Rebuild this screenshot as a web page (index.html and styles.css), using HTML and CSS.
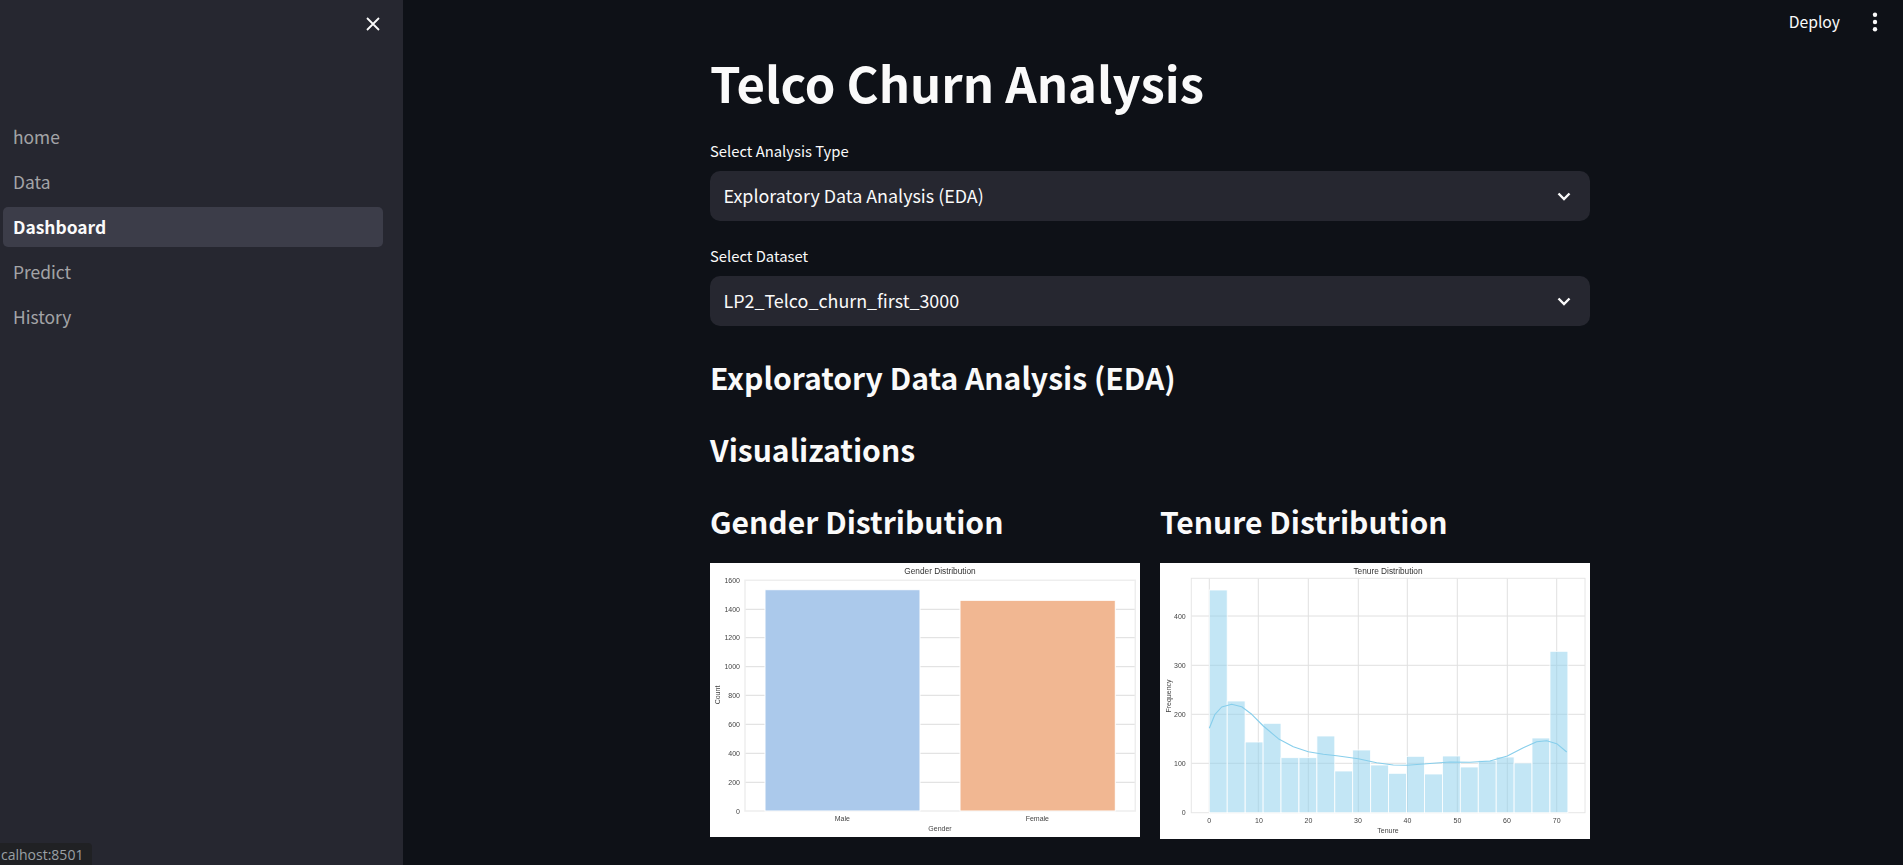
FILE: index.html
```html
<!DOCTYPE html>
<html>
  <head>
    <title>Dashboard</title>
    <link rel="stylesheet" href="styles.css">
  </head>
  <body>
    <div class="app">
      <aside class="sidebar">
        <div class="sidebar-top">
          <svg class="close-icon" width="14" height="14" viewBox="0 0 14 14">
            <path d="M1 1L13 13M13 1L1 13" stroke="#fafafa" stroke-width="1.8" fill="none" />
          </svg>
        </div>
        <nav class="nav">
          <a class="nav-item">home</a>
          <a class="nav-item">Data</a>
          <a class="nav-item active">Dashboard</a>
          <a class="nav-item">Predict</a>
          <a class="nav-item">History</a>
        </nav>
      </aside>

      <main class="main">
        <header class="toolbar">
          <span class="deploy">Deploy</span>
          <svg class="kebab" width="6" height="20" viewBox="0 0 6 20">
            <circle cx="3" cy="2.8" r="2.2" fill="#fafafa" />
            <circle cx="3" cy="10" r="2.2" fill="#fafafa" />
            <circle cx="3" cy="17.2" r="2.2" fill="#fafafa" />
          </svg>
        </header>

        <div class="content">
          <h1 class="title">Telco Churn Analysis</h1>

          <label class="field-label">Select Analysis Type</label>
          <div class="select">
            <span>Exploratory Data Analysis (EDA)</span>
            <svg width="14" height="9" viewBox="0 0 14 9">
              <path d="M1.5 1.5L7 7L12.5 1.5" stroke="#fafafa" stroke-width="2.4" fill="none" />
            </svg>
          </div>

          <label class="field-label second">Select Dataset</label>
          <div class="select">
            <span>LP2_Telco_churn_first_3000</span>
            <svg width="14" height="9" viewBox="0 0 14 9">
              <path d="M1.5 1.5L7 7L12.5 1.5" stroke="#fafafa" stroke-width="2.4" fill="none" />
            </svg>
          </div>

          <h2 class="heading first">Exploratory Data Analysis (EDA)</h2>
          <h2 class="heading">Visualizations</h2>

          <div class="columns">
            <section class="column">
              <h2 class="heading">Gender Distribution</h2>
              <svg class="chart" width="430" height="274" viewBox="0 0 430 274">
                <rect width="430" height="274" fill="#fff" />
                <g stroke="#ddd" stroke-width="1">
                  <path d="M35 46.3H425M35 74.7H425M35 103.7H425M35 132.3H425M35 161.3H425M35 190.3H425M35 219.3H425" />
                </g>
                <rect x="35" y="17.3" width="390.3" height="230.7" fill="none" stroke="#eee" stroke-width="1.5" />
                <rect x="55" y="26.7" width="155" height="221.3" fill="#abc9eb" stroke="#fff" />
                <rect x="250" y="37.3" width="155.3" height="210.7" fill="#f1b792" stroke="#fff" />
                <g class="chart-text">
                  <text x="230" y="10.5" text-anchor="middle" class="chart-title">Gender Distribution</text>
                  <g text-anchor="end">
                    <text x="30" y="19.8">1600</text>
                    <text x="30" y="48.8">1400</text>
                    <text x="30" y="77.2">1200</text>
                    <text x="30" y="106.2">1000</text>
                    <text x="30" y="134.8">800</text>
                    <text x="30" y="163.8">600</text>
                    <text x="30" y="192.8">400</text>
                    <text x="30" y="221.8">200</text>
                    <text x="30" y="250.5">0</text>
                  </g>
                  <g text-anchor="middle">
                    <text x="132.3" y="257.5">Male</text>
                    <text x="327.3" y="257.5">Female</text>
                    <text x="230" y="267.5">Gender</text>
                    <text transform="translate(10 132) rotate(-90)">Count</text>
                  </g>
                </g>
              </svg>
            </section>

            <section class="column">
              <h2 class="heading">Tenure Distribution</h2>
              <svg class="chart" width="430" height="276" viewBox="0 0 430 276">
                <rect width="430" height="276" fill="#fff" />
                <g stroke="#e0e0e0" stroke-width="1">
                  <path d="M31.3 53H425M31.3 102.3H425M31.3 151.3H425M31.3 200.3H425" />
                  <path d="M49.3 15.3V249.7M98.3 15.3V249.7M148.3 15.3V249.7M198.3 15.3V249.7M247.3 15.3V249.7M297.3 15.3V249.7M347.3 15.3V249.7M396.7 15.3V249.7" />
                </g>
                <rect x="31.3" y="15.3" width="393.7" height="234.4" fill="none" stroke="#e6e6e6" stroke-width="1" />
                <g fill="#87ceeb" fill-opacity="0.5" stroke="#fff" stroke-width="0.8">
                  <rect x="49.3" y="27" width="17.9" height="222.7" />
                  <rect x="67.2" y="138" width="17.9" height="111.7" />
                  <rect x="85.2" y="179" width="17.9" height="70.7" />
                  <rect x="103.1" y="160.3" width="17.9" height="89.4" />
                  <rect x="121" y="194.7" width="17.9" height="55" />
                  <rect x="139" y="194.7" width="17.9" height="55" />
                  <rect x="156.9" y="173" width="17.9" height="76.7" />
                  <rect x="174.8" y="208" width="17.9" height="41.7" />
                  <rect x="192.7" y="187" width="17.9" height="62.7" />
                  <rect x="210.7" y="202" width="17.9" height="47.7" />
                  <rect x="228.6" y="210.3" width="17.9" height="39.4" />
                  <rect x="246.5" y="193.3" width="17.9" height="56.4" />
                  <rect x="264.5" y="211" width="17.9" height="38.7" />
                  <rect x="282.4" y="193" width="17.9" height="56.7" />
                  <rect x="300.3" y="204" width="17.9" height="45.7" />
                  <rect x="318.3" y="197.3" width="17.9" height="52.4" />
                  <rect x="336.2" y="194" width="17.9" height="55.7" />
                  <rect x="354.1" y="200" width="17.9" height="49.7" />
                  <rect x="372" y="175" width="17.9" height="74.7" />
                  <rect x="390" y="88.3" width="17.9" height="161.4" />
                </g>
                <polyline fill="none" stroke="#87ceeb" stroke-width="1.1" stroke-linejoin="round" points="49.3,165.3 55,151.3 61.7,144 71.7,141.3 81.7,143.7 91.7,151.3 103.3,163 118.3,175.7 133.3,183.7 148.3,188.7 163.3,191.3 176.7,192.7 198.3,195.7 216.7,199.7 233.3,202 247.3,202.3 266.7,200.7 290,199 310,199.3 330,198 347.3,193 363.3,184.7 376.7,178.7 386.7,177.7 396.7,180.7 406.7,189" />
                <g class="chart-text">
                  <text x="228" y="10.5" text-anchor="middle" class="chart-title">Tenure Distribution</text>
                  <g text-anchor="end">
                    <text x="25.7" y="55.5">400</text>
                    <text x="25.7" y="104.8">300</text>
                    <text x="25.7" y="153.8">200</text>
                    <text x="25.7" y="202.8">100</text>
                    <text x="25.7" y="252.2">0</text>
                  </g>
                  <g text-anchor="middle">
                    <text x="49.3" y="260">0</text>
                    <text x="99" y="260">10</text>
                    <text x="148.5" y="260">20</text>
                    <text x="198" y="260">30</text>
                    <text x="247.5" y="260">40</text>
                    <text x="297.5" y="260">50</text>
                    <text x="347" y="260">60</text>
                    <text x="396.7" y="260">70</text>
                    <text x="228" y="269.5">Tenure</text>
                    <text transform="translate(10.5 133) rotate(-90)">Frequency</text>
                  </g>
                </g>
              </svg>
            </section>
          </div>
        </div>
      </main>
    </div>

    <div class="status-bubble">calhost:8501</div>
  </body>
</html>
```

FILE: styles.css
```css
html,
body {
  margin: 0;
  height: 100%;
  overflow: hidden;
}

body {
  background: #0e1117;
  color: #fafafa;
  font-family: "Noto Sans CJK SC", "Noto Sans", sans-serif;
}

.app {
  display: flex;
  height: 100vh;
}

.sidebar {
  flex: 0 0 403px;
  background: #262730;
  box-sizing: border-box;
  padding: 0 20px 0 3px;
}

.sidebar-top {
  display: flex;
  justify-content: flex-end;
  height: 117px;
  padding-top: 17px;
  box-sizing: border-box;
}

.close-icon {
  margin-right: 3px;
}

.nav {
  display: flex;
  flex-direction: column;
  gap: 5px;
}

.nav-item {
  display: flex;
  align-items: center;
  height: 40px;
  padding: 0 10px 2px;
  box-sizing: border-box;
  border-radius: 5px;
  font-size: 17.4px;
  color: rgba(250, 250, 250, 0.6);
}

.nav-item.active {
  background: #3c3d49;
  color: #fafafa;
  font-weight: 700;
}

.main {
  flex: 1;
  position: relative;
  padding-left: 307px;
}

.toolbar {
  position: absolute;
  top: 12px;
  right: 25px;
  display: flex;
  align-items: center;
  gap: 32px;
}

.deploy {
  font-size: 15.7px;
  line-height: 20px;
}

.kebab {
  display: block;
}

.content {
  width: 880px;
  padding-top: 46px;
}

.title {
  margin: 0;
  font-size: 49px;
  font-weight: 700;
  line-height: 72px;
}

.field-label {
  display: block;
  margin-top: 21px;
  font-size: 14.8px;
  line-height: 24px;
  margin-bottom: 8px;
}

.field-label.second {
  margin-top: 23px;
}

.select {
  display: flex;
  align-items: center;
  justify-content: space-between;
  height: 50px;
  padding: 0 19px 0 13.5px;
  background: #262730;
  border-radius: 10px;
  font-size: 17.9px;
}

.select span {
  padding-bottom: 2px;
}

.heading {
  margin: 0 0 30px;
  font-size: 30.1px;
  font-weight: 600;
  line-height: 42px;
}

.heading.first {
  margin-top: 30px;
}

.columns {
  display: flex;
  gap: 20px;
}

.column {
  flex: 1;
  min-width: 0;
}

.column .heading {
  margin-bottom: 21px;
}

.chart {
  display: block;
  filter: blur(0.5px);
}

.chart-text {
  font-family: "Liberation Sans", Arial, sans-serif;
  font-size: 7px;
  fill: #444;
}

.chart-title {
  font-size: 8.3px;
  fill: #333;
}

.status-bubble {
  position: absolute;
  left: 0;
  bottom: 0;
  width: 92px;
  height: 22px;
  padding-left: 1px;
  box-sizing: border-box;
  background: #202124;
  border-top-right-radius: 4px;
  color: #9aa0a6;
  font-family: "Open Sans", sans-serif;
  font-size: 14px;
  line-height: 24px;
  white-space: nowrap;
}
```
